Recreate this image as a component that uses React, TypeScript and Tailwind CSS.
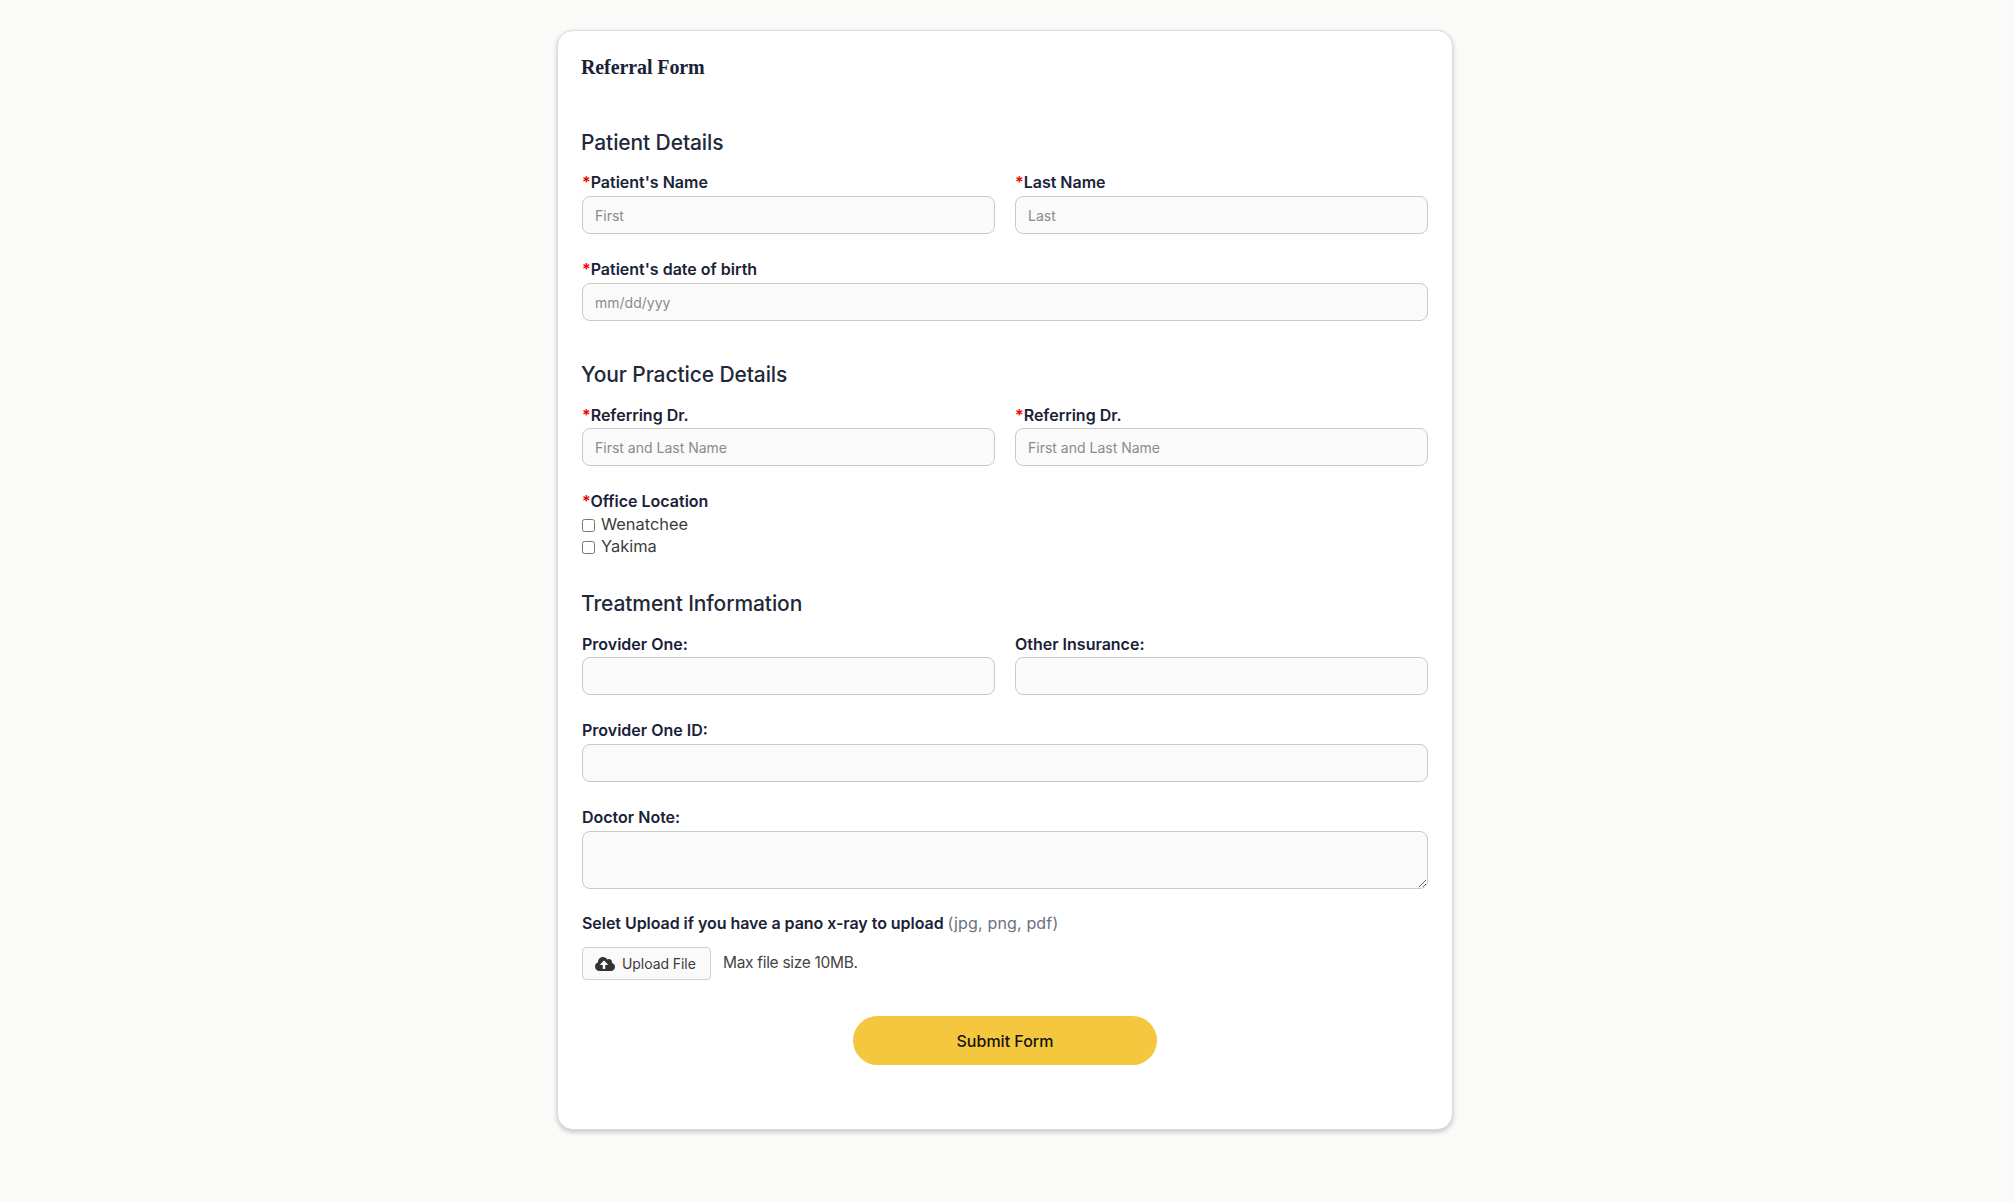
import { FaCloudUploadAlt } from "react-icons/fa";

const sans = "font-['Inter','Noto_Sans',sans-serif]";

function Label({ text, required, tight }: { text: string; required?: boolean; tight?: boolean }) {
  return (
    <label className={`block h-6 text-[16px] leading-6 font-semibold text-[#1a2238] ${tight ? "mb-[1px]" : "mb-[2px]"}`}>
      {required && <span className="text-[#f00000]">*</span>}
      {text}
    </label>
  );
}

function Field({ label, placeholder, required, tight }: { label: string; placeholder?: string; required?: boolean; tight?: boolean }) {
  return (
    <div>
      <Label text={label} required={required} tight={tight} />
      <input
        placeholder={placeholder}
        className="block w-full h-[38px] px-3 bg-[#fafafa] border border-[#c9c9c9] rounded-lg text-[14px] placeholder:text-[#8b8b8b] outline-none"
      />
    </div>
  );
}

function Heading({ children, className }: { children: string; className: string }) {
  return <h2 className={`h-[30px] text-[21px] leading-[30px] font-medium text-[#1e293b] tracking-[-0.005em] ${className}`}>{children}</h2>;
}

export default function App() {
  return (
    <div className={`min-h-screen bg-[#fafaf8] flex justify-center pr-[5px] items-start ${sans}`}>
      <form className="w-[896px] mt-[30px] border border-[#dcdcdc] rounded-2xl bg-white shadow-[0_2px_5px_rgba(0,0,0,0.22)] px-6 pt-[22px] pb-[64px]">
        <h1 className="h-7 -ml-px text-[20px] leading-7 font-bold text-[#1a2238] font-['Liberation_Serif',serif] tracking-[-0.005em]">Referral Form</h1>

        <Heading className="mt-[47px] mb-[12px] -ml-px">Patient Details</Heading>
        <div className="grid grid-cols-2 gap-5">
          <Field label="Patient's Name" placeholder="First" required />
          <Field label="Last Name" placeholder="Last" required />
        </div>
        <div className="mt-[23px]">
          <Field label="Patient's date of birth" placeholder="mm/dd/yyy" required />
        </div>

        <Heading className="mt-[39px] mb-[13px] -ml-px">Your Practice Details</Heading>
        <div className="grid grid-cols-2 gap-5">
          <Field label="Referring Dr." placeholder="First and Last Name" required tight />
          <Field label="Referring Dr." placeholder="First and Last Name" required tight />
        </div>
        <div className="mt-[23px]">
          <div className="h-6 text-[16px] leading-6 font-semibold text-[#1a2238]">
            <span className="text-[#f00000]">*</span>Office Location
          </div>
          {["Wenatchee", "Yakima"].map((name) => (
            <label key={name} className="flex items-center h-[22px] text-[16.4px] text-[#3c3c3c]">
              <input type="checkbox" className="w-[13px] h-[13px] mr-[6px] mt-[2px]" />
              {name}
            </label>
          ))}
        </div>

        <Heading className="mt-[32px] mb-[13px] -ml-px">Treatment Information</Heading>
        <div className="grid grid-cols-2 gap-5">
          <Field label="Provider One:" tight />
          <Field label="Other Insurance:" tight />
        </div>
        <div className="mt-[23px]">
          <Field label="Provider One ID:" />
        </div>
        <div className="mt-[23px]">
          <Label text="Doctor Note:" />
          <textarea className="block w-full h-[58px] bg-[#fafafa] border border-[#c9c9c9] rounded-lg outline-none" />
        </div>

        <div className="mt-[22px] h-6 text-[16px] leading-6 font-semibold text-[#1a2238] tracking-[-0.003em]">
          Selet Upload if you have a pano x-ray to upload <span className="font-normal text-[#6b7280] tracking-[0.01em]">(jpg, png, pdf)</span>
        </div>
        <div className="mt-3 flex items-center">
          <button type="button" className="flex items-center w-[129px] h-[33px] pl-3 bg-[#fafafa] border border-[#cfcfcf] rounded text-[14px] text-[#3c3c3c] tracking-[-0.005em]">
            <FaCloudUploadAlt className="w-5 h-5 mr-[7px] text-[#333333]" />
            Upload File
          </button>
          <span className="ml-3 mb-[2px] text-[15.5px] tracking-[-0.02em] text-[#444444]">Max file size 10MB.</span>
        </div>

        <div className="mt-9 flex justify-center">
          <button type="button" className="w-[304px] h-[49px] rounded-full bg-[#f4c73f] text-[16px] font-medium text-[#141414]">
            Submit Form
          </button>
        </div>
      </form>
    </div>
  );
}
